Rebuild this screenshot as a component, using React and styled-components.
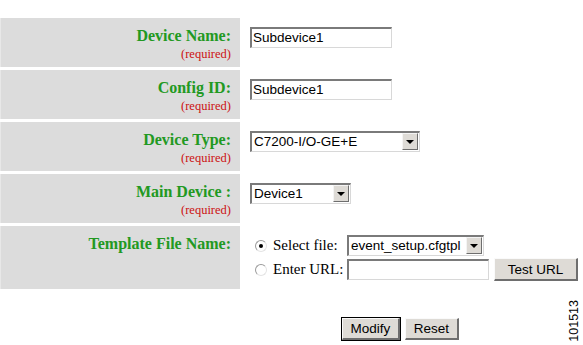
import React from "react";
import styled, { createGlobalStyle } from "styled-components";

const GlobalStyle = createGlobalStyle`
  html, body {
    margin: 0;
    padding: 0;
    background: #ffffff;
  }
  body {
    width: 583px;
    height: 345px;
    overflow: hidden;
    position: relative;
    font-family: "Liberation Serif", "Times New Roman", serif;
  }
`;

const Page = styled.div`
  padding-top: 18px;
`;

const FormGrid = styled.div`
  display: grid;
  grid-template-columns: 240px 1fr;
  row-gap: 3px;
`;

const LabelCell = styled.div`
  background: #dcdcdc;
  border-left: 1px solid #e8e8e8;
  height: ${(p) => p.$h}px;
  box-sizing: border-box;
  padding: 8px 9px 0 0;
  text-align: right;
`;

const FieldCell = styled.div`
  padding: 9px 0 0 10px;
  display: flex;
  flex-direction: column;
  gap: 2px;
`;

const Label = styled.div`
  color: #229922;
  font-weight: bold;
  font-size: 16px;
  line-height: 19px;
`;

const Required = styled.div`
  color: #cc1111;
  font-size: 12.5px;
  line-height: 14px;
  margin-top: 2px;
`;

const TextBox = styled.div`
  width: ${(p) => p.$w}px;
  height: 21px;
  box-sizing: border-box;
  border-top: 2px solid #7a7a7a;
  border-left: 2px solid #7a7a7a;
  border-right: 1px solid #d8d8d8;
  border-bottom: 1px solid #d8d8d8;
  background: #fff;
  font-family: "Liberation Sans", Arial, sans-serif;
  font-size: 13.5px;
  line-height: 18px;
  padding-left: 1px;
  color: #000;
  white-space: nowrap;
  overflow: hidden;
`;

const SelectBox = styled.div`
  width: ${(p) => p.$w}px;
  height: 21px;
  box-sizing: border-box;
  border-top: 2px solid #7a7a7a;
  border-left: 2px solid #7a7a7a;
  border-right: 1px solid #d8d8d8;
  border-bottom: 1px solid #d8d8d8;
  background: #fff;
  display: flex;
  align-items: stretch;
  font-family: "Liberation Sans", Arial, sans-serif;
  font-size: 13.5px;
  line-height: 18px;
`;

const SelectText = styled.div`
  flex: 1;
  padding-left: 2px;
  white-space: nowrap;
  overflow: hidden;
`;

const ArrowButton = styled.div`
  width: 14px;
  margin: 0 1px 1px 0;
  background: #dedbd6;
  border-top: 1px solid #f4f4f4;
  border-left: 1px solid #f4f4f4;
  border-right: 1px solid #6e6e6e;
  border-bottom: 1px solid #6e6e6e;
  display: flex;
  align-items: center;
  justify-content: center;
  &::after {
    content: "";
    border-left: 4px solid transparent;
    border-right: 4px solid transparent;
    border-top: 4px solid #000;
  }
`;

const OptionLine = styled.div`
  display: flex;
  align-items: center;
  height: ${(p) => p.$h}px;
`;

const Radio = styled.span`
  width: 12px;
  height: 12px;
  box-sizing: border-box;
  border-radius: 50%;
  border: 1px solid #9a9a9a;
  border-bottom-color: #e4e4e4;
  border-right-color: #e4e4e4;
  background: #fff;
  margin: 0 6px 0 5px;
  display: flex;
  align-items: center;
  justify-content: center;
  &::after {
    content: "";
    width: 4px;
    height: 4px;
    border-radius: 50%;
    background: ${(p) => (p.$checked ? "#000" : "transparent")};
  }
`;

const OptionText = styled.span`
  font-size: 15px;
  width: 74px;
  color: #000;
`;

const Button = styled.div`
  width: ${(p) => p.$w}px;
  height: ${(p) => p.$h}px;
  margin-left: ${(p) => p.$ml || 0}px;
  box-sizing: border-box;
  background: #dedbd6;
  border-top: 1px solid #fafafa;
  border-left: 1px solid #fafafa;
  border-right: 2px solid #6e6e6e;
  border-bottom: 2px solid #6e6e6e;
  outline: ${(p) => (p.$default ? "1px solid #000" : "none")};
  font-family: "Liberation Sans", Arial, sans-serif;
  font-size: 13.5px;
  display: flex;
  align-items: center;
  justify-content: center;
  color: #000;
`;

const ButtonRow = styled.div`
  display: flex;
  gap: 5px;
  padding: 29px 0 0 342px;
`;

const FigureNumber = styled.div`
  position: absolute;
  right: 2px;
  bottom: 3px;
  writing-mode: vertical-rl;
  transform: rotate(180deg);
  font-family: "Liberation Sans", Arial, sans-serif;
  font-size: 12.5px;
  color: #000;
`;

const rows = [
  { label: "Device Name:", kind: "text", value: "Subdevice1", w: 142 },
  { label: "Config ID:", kind: "text", value: "Subdevice1", w: 142 },
  { label: "Device Type:", kind: "select", value: "C7200-I/O-GE+E", w: 170 },
  { label: "Main Device :", kind: "select", value: "Device1", w: 101 },
];

function Field({ row }) {
  if (row.kind === "select") {
    return (
      <SelectBox $w={row.w}>
        <SelectText>{row.value}</SelectText>
        <ArrowButton />
      </SelectBox>
    );
  }
  return <TextBox $w={row.w}>{row.value}</TextBox>;
}

export default function App() {
  return (
    <>
      <GlobalStyle />
      <Page>
        <FormGrid>
          {rows.map((row) => (
            <React.Fragment key={row.label}>
              <LabelCell $h={49}>
                <Label>{row.label}</Label>
                <Required>(required)</Required>
              </LabelCell>
              <FieldCell>
                <Field row={row} />
              </FieldCell>
            </React.Fragment>
          ))}
          <LabelCell $h={63}>
            <Label>Template File Name:</Label>
          </LabelCell>
          <FieldCell>
            <OptionLine $h={21}>
              <Radio $checked />
              <OptionText>Select file:</OptionText>
              <SelectBox $w={137}>
                <SelectText>event_setup.cfgtpl</SelectText>
                <ArrowButton />
              </SelectBox>
            </OptionLine>
            <OptionLine $h={23}>
              <Radio />
              <OptionText>Enter URL:</OptionText>
              <TextBox $w={142} />
              <Button $w={84} $h={23} $ml={5}>
                Test URL
              </Button>
            </OptionLine>
          </FieldCell>
        </FormGrid>
        <ButtonRow>
          <Button $w={58} $h={22} $default>
            Modify
          </Button>
          <Button $w={54} $h={22}>
            Reset
          </Button>
        </ButtonRow>
      </Page>
      <FigureNumber>101513</FigureNumber>
    </>
  );
}
